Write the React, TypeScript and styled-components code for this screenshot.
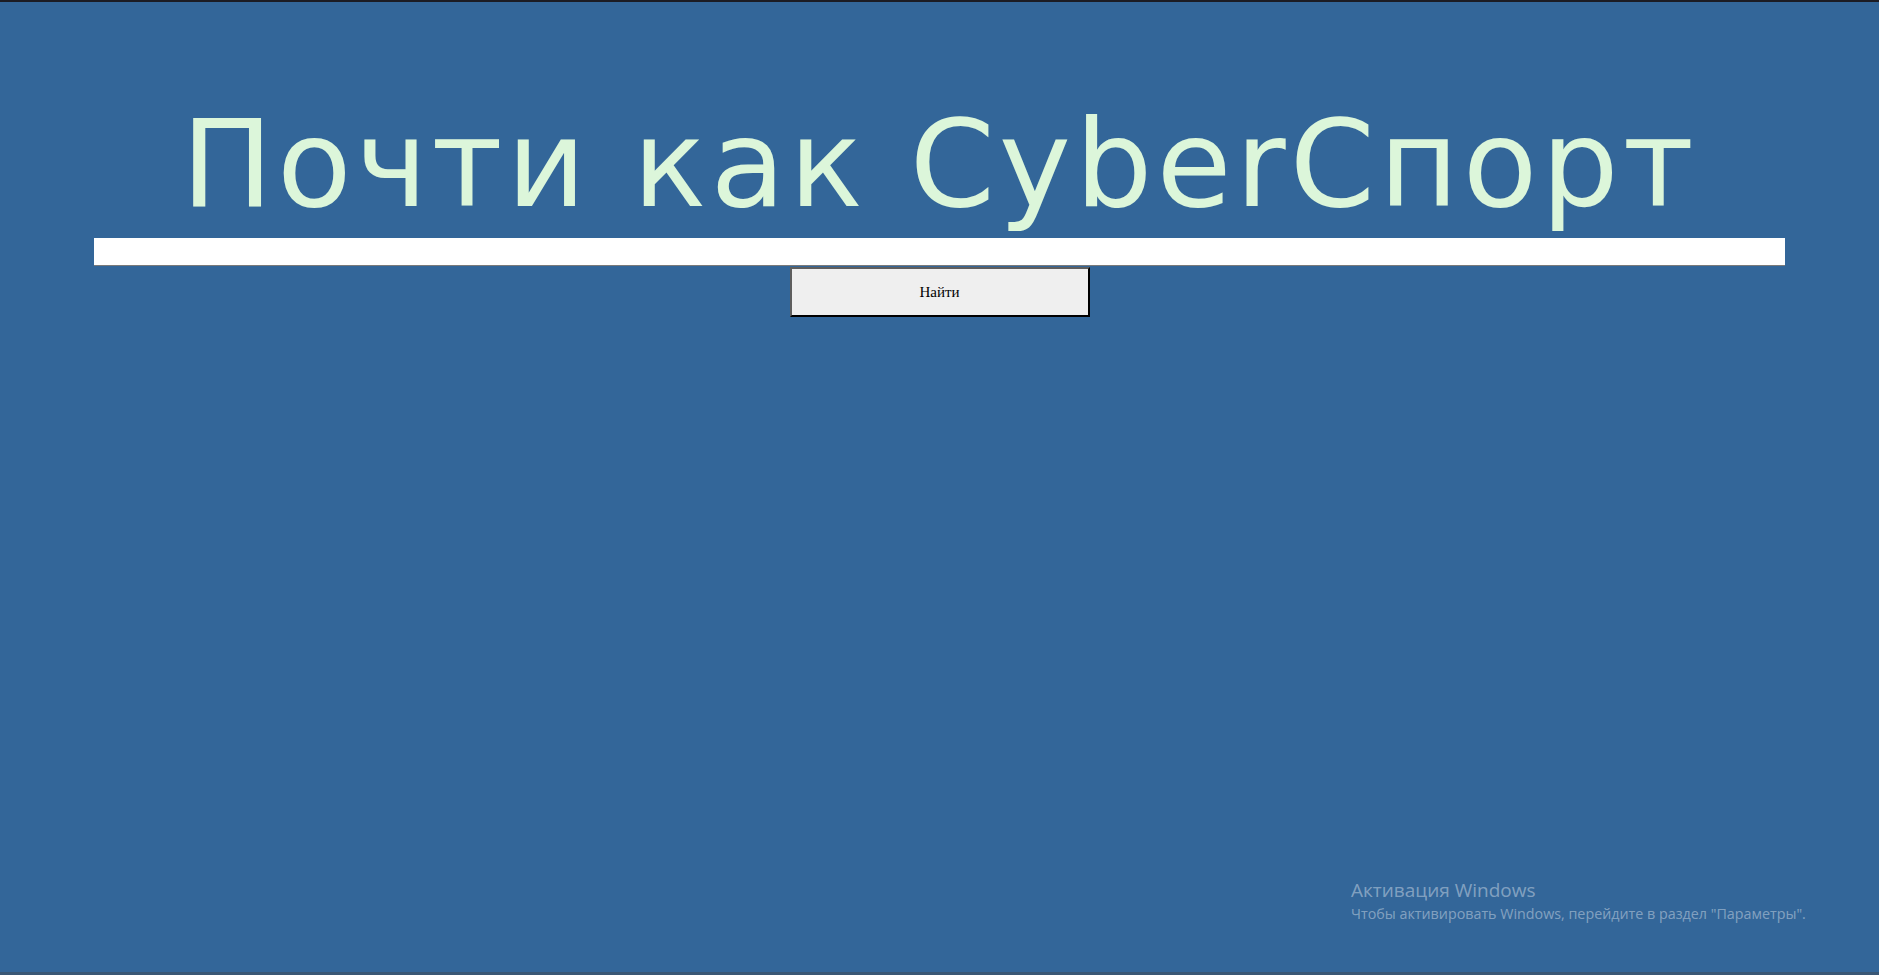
import React from "react";
import styled, { createGlobalStyle } from "styled-components";

const Global = createGlobalStyle`
  html, body {
    margin: 0;
    padding: 0;
    background: #336699;
  }
  #root {
    min-height: 975px;
  }
`;

const Page = styled.div`
  position: relative;
  min-height: 975px;
  box-sizing: border-box;
  background: #336699;
  border-top: 2px solid #1c1c24;
  display: flex;
  flex-direction: column;
  align-items: center;
`;

const Title = styled.h1`
  margin: 0;
  padding-top: 101px;
  height: 122px;
  font-family: "DejaVu Sans", sans-serif;
  font-weight: 400;
  font-size: 122px;
  line-height: 122px;
  letter-spacing: 4px;
  color: #dcf6da;
  white-space: nowrap;
  text-align: center;
`;

const SearchForm = styled.form`
  width: 100%;
  display: flex;
  flex-direction: column;
  align-items: center;
  margin-top: 13px;
`;

const SearchInput = styled.input`
  width: 90%;
  height: 28px;
  box-sizing: border-box;
  border: none;
  border-bottom: 1px solid #7a7a7a;
  background: #ffffff;
  outline: none;
  padding: 0 4px;
  font-family: "Liberation Sans", sans-serif;
  font-size: 14px;
`;

const SearchButton = styled.button`
  width: 300px;
  height: 50px;
  margin-top: 1px;
  box-sizing: border-box;
  background: #efefef;
  border: 2px solid #000;
  border-top-color: #5e5e5e;
  border-left-color: #5e5e5e;
  font-family: "Liberation Serif", serif;
  font-weight: 400;
  font-size: 15px;
  color: #000;
  cursor: pointer;
`;

const Watermark = styled.div`
  position: absolute;
  left: 1351px;
  top: 876px;
  font-family: "Open Sans", "Noto Sans", sans-serif;
  color: rgba(255, 255, 255, 0.4);
  pointer-events: none;
`;

const WatermarkTitle = styled.div`
  font-size: 19px;
  line-height: 25px;
`;

const WatermarkText = styled.div`
  font-size: 14.3px;
  line-height: 21px;
`;

const TaskbarEdge = styled.div`
  position: absolute;
  left: 0;
  right: 0;
  bottom: 0;
  height: 3px;
  background: #3a5775;
`;

export default function App() {
  return (
    <>
      <Global />
      <Page>
        <Title>Почти как CyberСпорт</Title>
        <SearchForm onSubmit={(e) => e.preventDefault()}>
          <SearchInput type="text" />
          <SearchButton type="submit">Найти</SearchButton>
        </SearchForm>
        <Watermark>
          <WatermarkTitle>Активация Windows</WatermarkTitle>
          <WatermarkText>
            Чтобы активировать Windows, перейдите в раздел "Параметры".
          </WatermarkText>
        </Watermark>
        <TaskbarEdge />
      </Page>
    </>
  );
}
